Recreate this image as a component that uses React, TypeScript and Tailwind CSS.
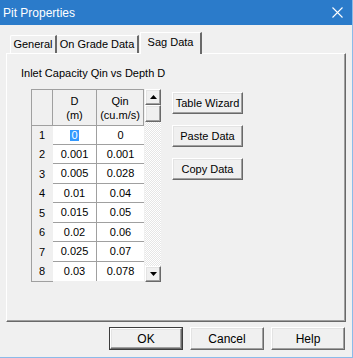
import React from 'react';

const rows = [
  { n: 1, d: '0', q: '0', h: 'h-[19px]' },
  { n: 2, d: '0.001', q: '0.001', h: 'h-[19px]' },
  { n: 3, d: '0.005', q: '0.028', h: 'h-[20px]' },
  { n: 4, d: '0.01', q: '0.04', h: 'h-[19px]' },
  { n: 5, d: '0.015', q: '0.05', h: 'h-[20px]' },
  { n: 6, d: '0.02', q: '0.06', h: 'h-[19px]' },
  { n: 7, d: '0.025', q: '0.07', h: 'h-[20px]' },
  { n: 8, d: '0.03', q: '0.078', h: 'h-[19px]' },
];

// classic raised 3D look shared by buttons and scroll arrows
const raised =
  'bg-[#f0f0f0] border border-t-white border-l-white border-r-[#696969] border-b-[#696969] shadow-[inset_-1px_-1px_0_#a0a0a0,inset_1px_1px_0_#e3e3e3]';

function WinButton({ label, className = '' }: { label: string; className?: string }) {
  return (
    <div className={`flex items-center justify-center text-[11px] text-black ${raised} ${className}`}>
      {label}
    </div>
  );
}

function Arrow({ up }: { up: boolean }) {
  return (
    <svg width="7" height="4" viewBox="0 0 7 4">
      {up ? <path d="M3.5 0 L7 4 L0 4 Z" fill="#000" /> : <path d="M0 0 L7 0 L3.5 4 Z" fill="#000" />}
    </svg>
  );
}

function DataGrid() {
  return (
    <div className="flex h-[193px]">
      <div className="flex flex-col w-[113px]">
        {/* header */}
        <div className="flex h-[37px] border-t border-l border-[#a0a0a0] bg-[#f0f0f0]">
          <div className="w-[21px] border-r border-b border-[#a0a0a0]" />
          <div className="w-[44px] flex flex-col items-center justify-center leading-[14px] border-r border-b border-[#a0a0a0]">
            <span>D</span>
            <span>(m)</span>
          </div>
          <div className="flex-1 flex flex-col items-center justify-center leading-[14px] border-r border-b border-[#a0a0a0]">
            <span>Qin</span>
            <span>(cu.m/s)</span>
          </div>
        </div>
        {/* body */}
        {rows.map((r, i) => (
          <div key={r.n} className={`flex ${r.h}`}>
            <div className="w-[22px] border-l border-[#a0a0a0] bg-[#f0f0f0] flex items-center justify-center pr-px">
              {r.n}
            </div>
            <div
              className={`w-[44px] bg-white flex items-center justify-center border-r border-[#a0a0a0] ${
                i < rows.length - 1 ? 'border-b' : ''
              }`}
            >
              {i === 0 ? <span className="bg-[#3399ff] text-white px-px leading-[11px]">0</span> : r.d}
            </div>
            <div
              className={`flex-1 bg-white flex items-center justify-center ${
                i < rows.length - 1 ? 'border-b border-[#a0a0a0]' : ''
              }`}
            >
              {r.q}
            </div>
          </div>
        ))}
        <div className="w-[22px] h-px bg-[#a0a0a0]" />
      </div>
      {/* scrollbar */}
      <div className="flex flex-col w-[17px] pl-px">
        <div className={`h-[16px] flex items-center justify-center ${raised}`}>
          <Arrow up />
        </div>
        <div className={`h-[17px] ${raised}`} />
        <div className="flex-1 bg-[repeating-conic-gradient(#ffffff_0%_25%,#e6e6e6_0%_50%)] bg-size-[2px_2px]" />
        <div className={`h-[16px] flex items-center justify-center ${raised}`}>
          <Arrow up={false} />
        </div>
      </div>
    </div>
  );
}

export default function App() {
  return (
    <div className="w-[353px] h-[358px] bg-[#f0f0f0] border-r border-b border-[#8bbbe9] font-['Liberation_Sans',Arial,sans-serif] text-[11px] text-black flex flex-col">
      {/* title bar */}
      <div className="h-[25px] bg-[#2b7bca] flex items-center justify-between pl-[3px] pr-[9px]">
        <span className="text-white text-[12px]">Pit Properties</span>
        <svg width="11" height="11" viewBox="0 0 11 11">
          <path d="M0.5 0.5 L10.5 10.5 M10.5 0.5 L0.5 10.5" stroke="#fff" strokeWidth="1.1" />
        </svg>
      </div>

      {/* tabs */}
      <div className="mt-[7px] h-[21px] flex items-end pl-[10px]">
        <div className="h-[18px] w-[47px] flex items-center justify-center border-t border-l border-white border-r-2 border-r-[#696969] rounded-tl-[2px]">
          General
        </div>
        <div className="h-[18px] w-[82px] flex items-center justify-center border-t border-white border-r-2 border-r-[#696969]">
          On Grade Data
        </div>
        <div className="relative z-10 -mb-px h-[22px] w-[62px] ml-px bg-[#f0f0f0] flex items-center justify-center pb-[2px] border-t border-l border-white border-r-2 border-r-[#696969]">
          Sag Data
        </div>
      </div>

      {/* tab panel */}
      <div className="ml-[6px] w-[340px] h-[269px] border border-t-white border-l-white border-r-[#696969] border-b-[#696969] shadow-[inset_-1px_-1px_0_#a0a0a0] pl-[14px] pt-[13px]">
        <div className="leading-[13px]">Inlet Capacity Qin vs Depth D</div>
        <div className="mt-[9px] ml-[10px] flex">
          <DataGrid />
          <div className="ml-[11px] mt-[3px] flex flex-col gap-[11px]">
            <WinButton label="Table Wizard" className="w-[71px] h-[22px]" />
            <WinButton label="Paste Data" className="w-[71px] h-[22px]" />
            <WinButton label="Copy Data" className="w-[71px] h-[22px]" />
          </div>
        </div>
      </div>

      {/* dialog buttons */}
      <div className="mt-[5px] flex justify-end gap-[7px] pr-[7px]">
        <div className="border border-[#3c3c3c]">
          <WinButton label="OK" className="w-[72px] h-[21px] text-[12px]" />
        </div>
        <WinButton label="Cancel" className="w-[74px] h-[23px] text-[12px]" />
        <WinButton label="Help" className="w-[74px] h-[23px] text-[12px]" />
      </div>
    </div>
  );
}
